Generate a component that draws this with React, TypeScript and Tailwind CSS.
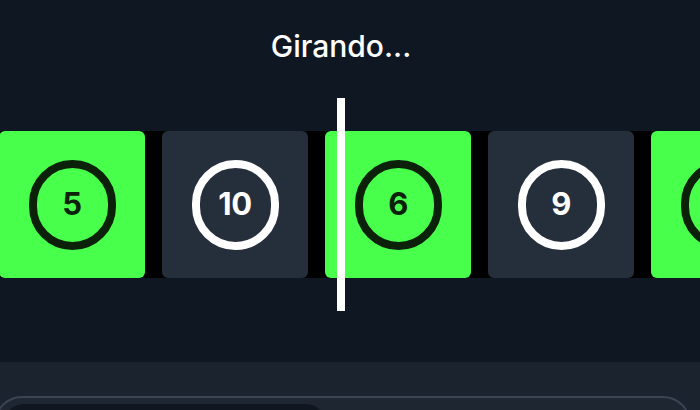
const reel = [
  { n: 5, win: true },
  { n: 10, win: false },
  { n: 6, win: true },
  { n: 9, win: false },
  { n: 7, win: true },
];

function ReelCard({ n, win }: { n: number; win: boolean }) {
  return (
    <div
      className={
        win
          ? "flex h-[147px] w-[146px] shrink-0 items-center justify-center rounded-[6px] bg-[#48ff4c]"
          : "flex h-[147px] w-[146px] shrink-0 items-center justify-center rounded-[6px] bg-[#252e3b]"
      }
    >
      <div
        className={
          win
            ? "flex h-[90px] w-[87px] items-center justify-center rounded-full border-[8px] border-[#0b2109] text-[31px] font-bold tracking-[-0.5px] text-[#0b2109]"
            : "flex h-[90px] w-[87px] items-center justify-center rounded-full border-[8px] border-white text-[31px] font-bold tracking-[-0.5px] text-white"
        }
      >
        {n}
      </div>
    </div>
  );
}

export default function App() {
  return (
    <main
      className="flex h-[410px] w-[700px] flex-col overflow-hidden bg-[#0f1822] text-white"
      style={{ fontFamily: "Inter, 'Noto Sans', sans-serif" }}
    >
      <div className="w-[682px] pt-[28px] text-center text-[30px] font-medium leading-[36px]">
        Girando...
      </div>

      <div className="relative mt-[34px] py-[33px]">
        <div className="ml-[-1px] flex gap-[17px] bg-black">
          {reel.map((c, i) => (
            <ReelCard key={i} n={c.n} win={c.win} />
          ))}
        </div>
        <div className="absolute left-[337px] top-0 h-full w-[8px] bg-white" />
      </div>

      <div className="mt-[51px] flex-1 bg-[#1a232e] pt-[34px]">
        <div className="ml-[-6px] h-[60px] w-[697px] rounded-[28px] border-2 border-[#3a4453] bg-[#1e2632] pl-[8px] pt-[6px]">
          <div className="h-[40px] w-[322px] rounded-[22px] bg-[#0f1620]" />
        </div>
      </div>
    </main>
  );
}
